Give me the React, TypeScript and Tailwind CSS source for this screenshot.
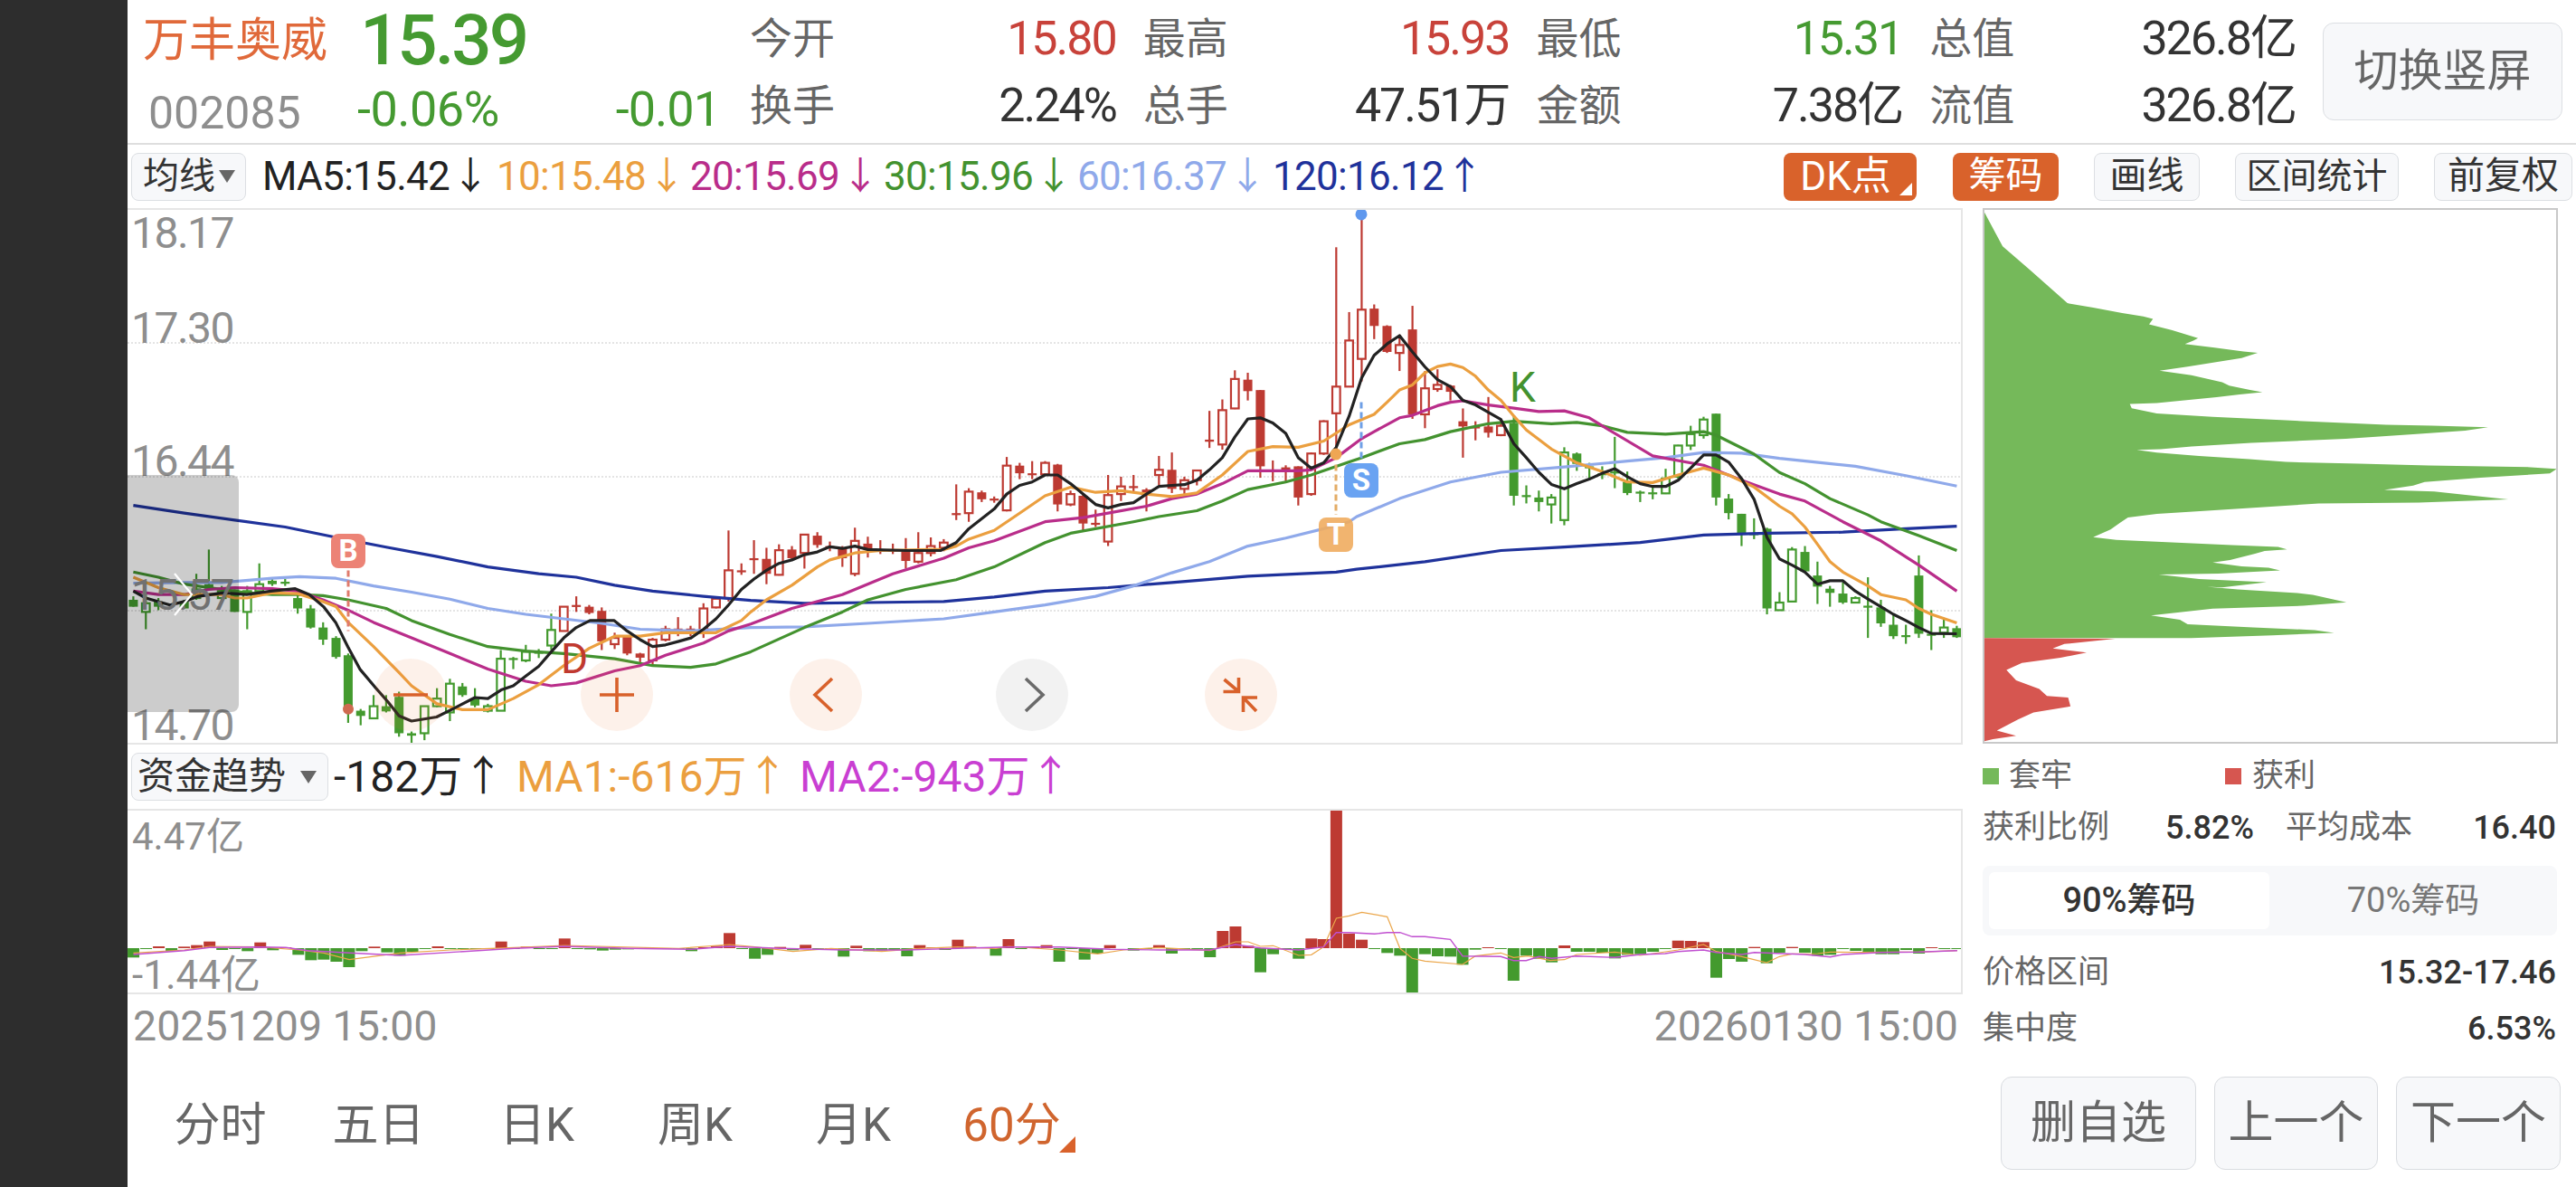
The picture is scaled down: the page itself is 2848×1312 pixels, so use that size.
import React from "react";

type P = [number, number];
const Y = (y: number) => 230 + y / 2.61;
const pts = (off: number, a: number[]): P[] => {
  const r: P[] = [];
  for (let i = 0; i < a.length; i += 2) r.push([off + a[i] / 2.24, Y(a[i + 1])]);
  return r;
};
const str = (p: P[]) => p.map((q) => q[0].toFixed(1) + "," + q[1].toFixed(1)).join(" ");

const ma5 = [
  ...pts(130, [39,1105,70,1125,130,1145,165,1135,200,1120,260,1110,320,1115,380,1105,440,1098,475,1115,510,1150,540,1195,570,1265,600,1330,640,1385,670,1425,697,1465,728,1480,790,1468,830,1445,885,1412,917,1415,950,1390,980,1378,1011,1350,1043,1322,1074,1280,1105,1240,1136,1210,1170,1190,1230,1190,1262,1220,1294,1245,1325,1265,1357,1260,1390,1250,1420,1240,1451,1215,1482,1185,1513,1145,1545,1100]),
  ...pts(830, [8,1070,39,1045,70,1025,102,1015,133,1000,165,992,196,977,227,982,258,975,290,985,384,988,470,988,509,965,540,925,603,868,634,825,666,800,697,790,729,770,760,770,792,795,823,825,854,855,885,865,917,855,948,850,980,825,1011,803,1043,800,1074,798,1105,785,1136,755,1168,720,1199,660,1231,608,1262,605,1293,620,1325,650,1356,720,1388,750,1419,735,1450,690,1482,600]),
  ...pts(1500, [12,490,43,425,75,392,106,368,138,415,169,458,200,495,232,515,263,555,294,568,357,610,389,680,420,720,451,762,482,797,514,810,545,795,576,782,608,765,639,752,670,775,702,795,733,803,765,803,796,785,827,750,859,712,890,712,921,733,953,780,984,840,1016,950,1047,1012,1078,1030,1110,1050,1141,1085,1172,1075,1204,1075,1235,1105,1266,1128,1298,1150,1329,1172,1360,1190,1392,1210,1423,1227,1486,1228]),
];
const ma10 = [
  ...pts(130, [39,1065,101,1095,165,1115,258,1115,290,1125,321,1125,383,1110,446,1112,509,1135,541,1150,571,1195,634,1265,697,1340,728,1378,791,1430,854,1447,917,1447,980,1415,1043,1375,1105,1320,1168,1270,1231,1235,1294,1235,1357,1225,1419,1225,1482,1225,1545,1190]),
  ...pts(830, [0,1165,39,1130,102,1088,165,1035,196,1015,258,995,321,988,446,985,478,985,509,975,540,955,603,930,666,880,729,830,792,805,854,820,917,815,980,825,1043,832,1105,822,1168,770,1231,702,1293,688,1356,690,1419,672,1482,625]),
  ...pts(1500, [12,610,43,595,75,560,106,525,138,510,169,475,200,457,232,450,263,460,294,485,326,525,357,555,389,600,420,640,482,695,545,735,608,760,670,790,733,792,796,770,859,750,921,770,984,805,1047,860,1078,882,1110,920,1141,970,1172,1020,1204,1050,1266,1090,1298,1115,1360,1130,1392,1155,1423,1172,1486,1197]),
];
const ma20 = [
  ...pts(130, [39,1105,101,1115,165,1115,226,1100,290,1095,383,1098,446,1105,509,1130,571,1160,634,1195,728,1240,823,1285,917,1330,1011,1365,1074,1378,1136,1370,1231,1335,1294,1320,1357,1290,1451,1255,1513,1220]),
  ...pts(830, [0,1200,102,1155,227,1115,352,1055,478,1010,540,980,603,960,729,905,823,893,885,880,980,860,1043,838,1105,825,1168,795,1231,758,1356,758,1388,755,1450,720]),
  ...pts(1500, [12,665,43,645,106,605,138,598,200,570,232,560,263,556,326,568,389,577,451,587,514,585,576,605,639,650,733,715,859,742,953,785,1047,825,1110,845,1204,905,1298,960,1392,1030,1486,1105]),
];
const ma30 = [
  ...pts(130, [39,1050,101,1065,165,1085,226,1095,321,1110,383,1115,446,1115,509,1118,571,1130,665,1155,728,1190,823,1230,917,1265,1011,1278,1105,1285,1231,1300,1325,1320,1419,1325,1482,1315]),
  ...pts(830, [0,1280,133,1210,227,1165,290,1130,384,1100,509,1072,603,1035,729,965,792,938,948,905,1011,890,1105,873,1168,845,1231,812,1325,790,1388,770,1450,745]),
  ...pts(1500, [12,720,106,680,169,668,232,645,326,622,389,615,482,622,545,618,608,628,670,647,765,652,859,645,890,655,984,710,1047,763,1110,795,1172,838,1266,885,1298,905,1392,945,1486,988]),
];
const ma60 = [
  ...pts(130, [39,1082,165,1080,258,1080,383,1068,451,1063,541,1068,634,1090,728,1108,823,1128,917,1155,1011,1172,1105,1185,1199,1198,1294,1215,1419,1220]),
  ...pts(830, [0,1210,133,1208,290,1198,478,1185,603,1165,729,1145,854,1120,948,1090,1043,1052,1136,1020,1231,975,1325,952,1419,925,1482,905]),
  ...pts(1500, [0,890,106,838,232,790,357,762,514,747,670,730,765,720,859,705,953,707,1047,722,1235,745,1360,772,1486,802]),
];
const ma120 = [
  ...pts(130, [39,858,165,880,290,900,415,920,541,950,665,978,791,1005,917,1035,1043,1055,1136,1065,1231,1088,1325,1105,1451,1120]),
  ...pts(830, [0,1132,133,1140,290,1138,478,1135,603,1122,729,1105,885,1095,1043,1080,1231,1062,1450,1050]),
  ...pts(1500, [0,1042,169,1020,357,988,514,978,702,965,859,943,1016,938,1204,935,1360,925,1486,918]),
];

// x, wickTop, wickBottom, bodyTop, bodyBottom, solid
type C = [number, number, number, number, number, number];
const G = "#439a2e";
const R = "#bd3a32";
const g3: C[] = [
  [39,1120,1150,1130,1150,1],[70,1110,1215,1140,1165,0],[101,1125,1160,1135,1150,1],[165,1130,1155,1135,1155,1],[195,1055,1130,1100,1125,0],[226,985,1100,1085,1098,1],[258,1090,1130,1105,1125,0],[290,1100,1165,1100,1165,1],[321,1090,1215,1105,1165,0],[351,1025,1110,1085,1105,0],[383,1070,1090,1075,1085,1],[415,1070,1090,1078,1082,1],
  [446,1115,1170,1125,1155,1],[478,1145,1213,1155,1210,1],[509,1195,1260,1210,1245,1],[541,1235,1300,1240,1295,1],[571,1285,1485,1290,1445,1],[602,1445,1492,1450,1465,1],[634,1405,1472,1437,1472,0],[665,1405,1455,1437,1452,1],[697,1395,1525,1410,1515,1],[728,1510,1545,1515,1522,1],[760,1437,1535,1437,1515,0],[791,1385,1440,1415,1437,0],[823,1358,1480,1372,1455,0],[854,1370,1410,1380,1405,1],[885,1385,1440,1415,1435,1],[917,1430,1455,1437,1450,0],[949,1275,1450,1300,1450,0],[980,1295,1330,1298,1303,1],[1011,1260,1310,1280,1305,0],[1043,1272,1298,1280,1285,1],[1074,1170,1275,1217,1262,0],
];
const r3: C[] = [
  [1105,1150,1220,1150,1220,0],[1136,1120,1165,1145,1150,1],[1168,1145,1172,1150,1168,1],[1199,1152,1275,1162,1250,1],[1231,1225,1272,1240,1258,0],[1262,1235,1290,1235,1285,1],[1294,1283,1310,1285,1297,1],[1325,1240,1322,1245,1305,0],[1357,1205,1250,1215,1245,0],[1388,1180,1235,1213,1218,1],[1419,1205,1235,1213,1218,1],[1451,1140,1240,1155,1225,0],[1482,1120,1155,1127,1152,0],[1513,930,1135,1045,1125,0],[1545,1025,1058,1045,1050,1],
];
const r4: C[] = [
  [8,958,1055,1010,1015,1],[39,980,1085,1012,1055,1],[70,970,1060,987,1058,0],[102,975,1015,985,1010,1],[133,940,1040,942,995,0],[165,935,980,945,972,1],[196,962,990,975,980,1],[227,975,1035,980,1010,1],[258,922,1062,960,1055,0],[290,948,1008,968,985,1],[321,958,998,985,988,1],[352,968,998,985,988,1],[384,952,1040,990,1018,1],[415,935,1025,995,1020,0],[446,950,1005,975,995,0],[478,955,990,965,980,0],[509,797,900,880,883,1],[540,808,905,818,880,0],[572,815,848,820,840,1],[603,832,850,838,843,1],[634,718,875,743,872,0],[666,735,782,743,765,1],[697,730,782,765,770,1],[729,730,770,735,768,0],[760,738,875,740,855,1],[792,815,860,825,855,0],[823,825,930,830,910,1],[854,870,920,908,912,1],[885,770,975,828,962,0],[917,775,845,803,825,0],[948,770,820,802,807,1],[980,808,875,812,830,1],[1011,715,800,755,770,0],[1043,705,822,755,810,1],[1074,775,835,785,810,0],[1105,755,800,757,785,0],[1136,585,692,668,674,1],[1168,552,697,583,682,0],[1199,468,580,493,578,0],[1231,475,555,495,528,1],[1262,525,778,525,745,1],[1293,728,788,755,760,1],[1325,742,790,748,760,1],[1356,745,858,745,835,1],[1388,705,830,708,825,0],[1419,612,712,615,708,0],[1450,113,700,515,592,0],[1482,300,515,382,515,0],[1513,18,500,293,435,0],[1544,278,378,290,340,1],
];
const r5: C[] = [
  [75,338,418,340,415,1],[106,365,470,395,418,0],[138,282,608,350,595,1],[169,470,635,520,595,0],[200,465,530,510,522,0],[232,510,555,512,530,1],[263,578,720,615,630,1],[294,615,670,630,633,1],[326,545,662,630,648,1],[357,608,658,628,655,0],
];
const g5: C[] = [
  [389,600,858,620,830,1],[420,800,852,828,832,1],[451,815,875,835,848,1],[482,825,910,835,855,0],[514,690,915,705,900,0],[545,705,758,708,738,1],[576,735,785,745,750,1],[608,745,782,765,770,1],[639,660,808,760,765,1],[670,760,828,790,822,1],[702,815,848,818,822,1],[733,800,840,820,825,1],[765,752,825,780,823,0],[796,683,780,685,775,0],[827,628,698,652,685,0],[859,602,665,610,655,0],[890,593,858,593,835,1],[921,825,898,838,880,1],[953,882,975,882,938,1],[984,895,955,938,943,1],[1016,922,1172,925,1155,1],[1047,1108,1160,1138,1160,0],[1078,978,1135,985,1135,0],[1110,975,1050,992,1048,1],[1141,1020,1142,1060,1092,1],[1172,1090,1150,1098,1110,1],[1204,1080,1142,1112,1138,1],[1235,1120,1140,1125,1138,0],[1266,1065,1240,1147,1150,1],[1298,1130,1208,1152,1198,1],[1329,1172,1243,1202,1235,1],[1360,1202,1257,1232,1236,1],[1392,1002,1240,1060,1228,1],[1423,1160,1275,1228,1233,1],[1454,1182,1240,1210,1225,0],[1486,1205,1240,1212,1238,1],
];

function Candle({ c, off, color }: { c: C; off: number; color: string }) {
  const x = off + c[0] / 2.24;
  const t = Y(c[3]);
  const h = Math.max(2.2, Y(c[4]) - t);
  return (
    <g>
      <line x1={x} x2={x} y1={Y(c[1])} y2={Y(c[2])} stroke={color} strokeWidth={2.2} />
      {c[5] ? (
        <rect x={x - 5} y={t} width={10} height={h} fill={color} />
      ) : (
        <rect x={x - 4.3} y={t} width={8.6} height={h} fill="#fff" stroke={color} strokeWidth={2.2} />
      )}
    </g>
  );
}

function MainChart() {
  return (
    <svg className="block h-[589px] w-[2027px]" viewBox="141 232 2027 589">
      {[379, 527, 675].map((y) => (
        <line key={y} x1={141} x2={2168} y1={y} y2={y} stroke="#c9c9c9" strokeWidth={1} strokeDasharray="2 2" />
      ))}
      {g3.map((c, i) => <Candle key={"a" + i} c={c} off={130} color={G} />)}
      {r3.map((c, i) => <Candle key={"b" + i} c={c} off={130} color={R} />)}
      {r4.map((c, i) => <Candle key={"c" + i} c={c} off={830} color={R} />)}
      {r5.map((c, i) => <Candle key={"d" + i} c={c} off={1500} color={R} />)}
      {g5.map((c, i) => <Candle key={"e" + i} c={c} off={1500} color={G} />)}
      <polyline points={str(ma120)} fill="none" stroke="#1f329b" strokeWidth={3.2} strokeLinejoin="round" />
      <polyline points={str(ma60)} fill="none" stroke="#8fa9ea" strokeWidth={3.2} strokeLinejoin="round" />
      <polyline points={str(ma30)} fill="none" stroke="#43922f" strokeWidth={3.2} strokeLinejoin="round" />
      <polyline points={str(ma20)} fill="none" stroke="#b92d8a" strokeWidth={3.2} strokeLinejoin="round" />
      <polyline points={str(ma10)} fill="none" stroke="#eb9f3f" strokeWidth={3.2} strokeLinejoin="round" />
      <polyline points={str(ma5)} fill="none" stroke="#222222" strokeWidth={3.2} strokeLinejoin="round" />
      <line x1={385} x2={385} y1={Y(1045)} y2={Y(1220)} stroke="#e07b6c" strokeWidth={3} strokeDasharray="7 4" />
      <circle cx={385} cy={Y(1445)} r={6} fill="#cf6a50" />
      <line x1={1477} x2={1477} y1={Y(740)} y2={Y(885)} stroke="#e3ac66" strokeWidth={3} strokeDasharray="7 4" />
      <circle cx={1477} cy={Y(710)} r={6.5} fill="#efa653" />
      <line x1={1505} x2={1505} y1={Y(560)} y2={Y(730)} stroke="#6f9fe6" strokeWidth={3} strokeDasharray="7 4" />
      <circle cx={1505} cy={Y(18)} r={6.5} fill="#5f98ee" />
    </svg>
  );
}

const z7 = [-31,-3,6,-10,5,10,22,-6,-3,-10,19,-7,3,-22,-40,-38,-45,-63,-10,5,-14,-25,-12,-3,6,-3,-3,-2,-2,22,-2,5,-2,-2,32,-2,-4,-8,-5,-4,-3,-3,-3,-3,-10,3,8,50,-2,-35,-22,4,-7,11,-5,-5,-28,8,-10,-8,-6,-27,10,3,-6,28,5,2,-25,30,-3,3,10,-45,-3,-38,-18,10];
const z8: [number, number][] = [[38,-8],[61,-2],[84,10],[107,-18],[130,-4],[153,-3],[176,-30],[199,57],[222,72],[245,8],[267,-80],[290,-20],[313,-2],[336,-35],[359,32],[381,30],[404,460],[427,48],[450,28],[473,-2],[496,-16],[519,-25],[541,-147],[564,-20],[587,-27],[610,-28],[632,-55],[655,-5],[678,3],[701,-2],[724,-108],[747,-25],[770,-35],[793,-47],[816,9],[838,-12],[861,-12],[884,-15],[907,-34],[930,-22],[953,-20],[976,-12],[998,-2],[1021,25],[1044,24],[1067,20],[1090,-98],[1113,-36],[1136,-45],[1159,4],[1181,-50],[1204,-15],[1227,4],[1250,-15],[1273,-25],[1296,-22],[1319,-2],[1342,-9],[1365,-12],[1388,-20],[1410,-20],[1433,-6],[1456,-18],[1479,2],[1502,-3],[1525,-2]];
const bars: [number, number][] = [
  ...z7.map((v, k): [number, number] => [130 + (25 + 19.98 * k) / 1.425, v / 3]),
  ...z8.map((b): [number, number] => [1230 + b[0] / 1.633, b[1] / 3]),
];
const subPts = (a: number[], off: number, sx: number): P[] => {
  const r: P[] = [];
  for (let i = 0; i < a.length; i += 2) r.push([off + a[i] / sx, 820 + a[i + 1] / 3]);
  return r;
};
const subPurple = [
  ...subPts([25,705,105,692,145,682,225,680,265,682,300,692,365,700,445,708,545,695,625,685,704,678,804,685,904,688,964,678,1044,685,1144,690,1244,690,1324,685,1404,680,1484,680,1564,688], 130, 1.425),
  ...subPts([84,690,176,690,222,672,267,683,336,690,381,680,404,632,427,632,473,637,496,632,519,632,541,646,564,646,610,655,632,710,701,712,724,725,747,725,770,712,793,718,838,710,907,715,953,705,998,702,1021,695,1067,690,1090,698,1136,705,1159,698,1250,705,1296,713,1319,705,1388,698,1456,697,1525,692], 1230, 1.633),
];
const subOrange = [
  ...subPts([25,700,105,690,145,678,225,680,285,690,325,700,365,722,445,700,525,690,625,682,704,675,884,685,964,672,1004,680,1064,695,1124,685,1204,695,1264,685,1324,680,1384,685,1404,678,1484,690,1544,703], 130, 1.425),
  ...subPts([20,690,84,682,176,692,222,663,245,663,267,678,290,676,336,708,359,706,381,680,404,585,427,577,450,565,496,580,519,685,541,718,564,727,632,738,655,710,701,700,724,715,750,710,790,725,816,722,838,705,907,697,953,708,1021,690,1067,672,1090,695,1136,712,1181,732,1204,712,1227,703,1273,702,1296,697,1342,698,1410,697,1456,697,1525,692], 1230, 1.633),
];

function SubChart() {
  return (
    <svg className="block h-[201px] w-[2027px]" viewBox="141 896 2027 201">
      {bars.map((b, i) => {
        const h = Math.max(1, Math.abs(b[1]));
        return (
          <rect key={i} x={b[0] - 6.5} width={13} y={b[1] > 0 ? 1048 - h : 1048} height={h} fill={b[1] > 0 ? R : G} />
        );
      })}
      <polyline points={str(subOrange)} fill="none" stroke="#eba64a" strokeWidth={1.2} />
      <polyline points={str(subPurple)} fill="none" stroke="#c04fd0" strokeWidth={1.4} />
    </svg>
  );
}

const cp = (a: number[]) => {
  const r: string[] = [];
  for (let i = 0; i < a.length; i += 2) r.push((a[i] / 2.347 + 2180).toFixed(1) + "," + Y(a[i + 1]).toFixed(1));
  return r.join(" ");
};
const chipGreen = cp([28,5,80,113,150,180,248,277,315,290,390,305,445,315,470,322,460,338,520,355,587,378,575,385,553,395,630,405,705,416,742,420,700,435,560,460,487,472,570,485,650,505,668,515,722,527,754,534,695,540,635,548,480,565,410,568,415,580,480,595,625,605,815,615,1075,628,1195,630,1340,635,1280,645,1145,655,970,668,725,680,570,690,490,698,428,700,480,708,590,718,720,727,815,735,1005,740,1185,745,1450,750,1518,755,1500,768,1320,780,1175,793,1145,803,1070,816,1200,820,1325,835,1392,843,1160,852,900,855,620,875,480,885,405,895,385,910,360,930,315,952,375,960,480,965,675,975,795,980,818,987,760,992,735,1000,670,1018,625,1025,700,1036,770,1040,800,1048,640,1057,485,1060,590,1073,690,1078,765,1082,650,1097,610,1095,690,1103,845,1113,885,1118,972,1140,860,1150,625,1158,465,1178,540,1190,560,1203,730,1212,890,1220,940,1228,780,1235,570,1243,28,1243]);
const chipRed = cp([28,1243,372,1245,240,1260,210,1273,298,1285,230,1300,130,1315,90,1335,115,1365,175,1390,195,1410,250,1415,256,1440,160,1458,120,1478,65,1510,115,1525,55,1535,28,1542]);

function Caret() {
  return (
    <svg className="block h-[14px] w-[18px]" viewBox="0 0 18 14">
      <polygon points="0,0 18,0 9,14" fill="#666666" />
    </svg>
  );
}

function MaItem({ text, color, arrow, w }: { text: string; color: string; arrow: string; w: string }) {
  return (
    <div className={"flex shrink-0 items-center whitespace-nowrap " + w + " " + color}>
      <span>{text}</span>
      <span className="flex w-[46px] shrink-0 justify-center text-[0.95em] leading-none tracking-normal">{arrow}</span>
    </div>
  );
}

function Stat({ label, value, color }: { label: string; value: string; color: string }) {
  return (
    <div className="flex items-center justify-between leading-[60px]">
      <span className="text-[47px] text-[#666666]">{label}</span>
      <span className={"text-[52px] tracking-[-2px] " + color}>{value}</span>
    </div>
  );
}

function CircleBtn({ pos, gray, children }: { pos: string; gray?: boolean; children: React.ReactNode }) {
  return (
    <div className={"absolute top-[496px] h-[80px] w-[80px] rounded-full " + pos + " " + (gray ? "bg-black/5" : "bg-[#e8732f]/10")}>
      <svg className="block h-[80px] w-[80px]" viewBox="0 0 80 80" fill="none" stroke={gray ? "#6a6a6a" : "#d8612b"} strokeWidth={3.6}>
        {children}
      </svg>
    </div>
  );
}

const toolBtn = "flex h-[53px] items-center justify-center rounded-[8px] border border-[#dcdfe3] bg-[#f7f8fa] text-[#333333]";
const bottomBtn = "flex h-[103px] items-center justify-center rounded-[12px] border border-[#d9dce0] bg-[#f7f8fa] text-[50px] text-[#666666]";
const axis = "absolute left-[4px] text-[48px] leading-[50px] tracking-[-1.5px] text-[#8e8e8e]";

export default function App() {
  return (
    <div className="flex h-[1312px] w-[2848px] overflow-hidden bg-white [font-family:Roboto,'Noto_Sans_CJK_SC',sans-serif]">
      <div className="h-full w-[141px] shrink-0 bg-[#2d2d2d]" />
      <div className="flex min-w-0 flex-1 flex-col">
        {/* header */}
        <div className="flex h-[160px] shrink-0 border-b-2 border-[#dedede]">
          <div className="ml-[17px] flex w-[638px] flex-col">
            <div className="flex h-[90px] items-center">
              <span className="w-[240px] text-[51px] leading-[60px] text-[#e0693a]">万丰奥威</span>
              <span className="text-[78px] font-medium leading-[78px] tracking-[-3px] text-[#459a31]">15.39</span>
            </div>
            <div className="flex h-[62px] items-center leading-none">
              <span className="ml-[6px] w-[231px] pt-[8px] text-[50px] text-[#8e8e8e]">002085</span>
              <span className="text-[54px] tracking-[-0.5px] text-[#459a31]">-0.06%</span>
              <span className="flex-1 text-right text-[54px] tracking-[-1px] text-[#459a31]">-0.01</span>
            </div>
          </div>
          <div className="ml-[33px] grid w-[1709px] grid-cols-4 grid-rows-[60px_60px] gap-x-[30px] gap-y-[14px] pt-[13px]">
            <Stat label="今开" value="15.80" color="text-[#c8423a]" />
            <Stat label="最高" value="15.93" color="text-[#c8423a]" />
            <Stat label="最低" value="15.31" color="text-[#459a31]" />
            <Stat label="总值" value="326.8亿" color="text-[#333333]" />
            <Stat label="换手" value="2.24%" color="text-[#333333]" />
            <Stat label="总手" value="47.51万" color="text-[#333333]" />
            <Stat label="金额" value="7.38亿" color="text-[#333333]" />
            <Stat label="流值" value="326.8亿" color="text-[#333333]" />
          </div>
          <div className="ml-[30px] mt-[25px] flex h-[108px] w-[265px] items-center justify-center rounded-[12px] border border-[#dcdfe3] bg-[#f7f8fa] text-[49px] text-[#666666]">
            切换竖屏
          </div>
        </div>
        {/* toolbar */}
        <div className="flex h-[70px] shrink-0 items-center pl-[4px] text-[44px] tracking-[-0.7px]">
          <div className="flex h-[53px] w-[127px] items-center gap-[4px] rounded-[8px] border border-[#dcdfe3] bg-[#f7f8fa] pl-[12px] text-[40px] tracking-normal text-[#333333]">
            <span>均线</span>
            <Caret />
          </div>
          <div className="ml-[18px] flex">
            <MaItem text="MA5:15.42" color="text-[#222222]" arrow="↓" w="w-[259px]" />
            <MaItem text="10:15.48" color="text-[#eb9f3f]" arrow="↓" w="w-[214px]" />
            <MaItem text="20:15.69" color="text-[#b92d8a]" arrow="↓" w="w-[214px]" />
            <MaItem text="30:15.96" color="text-[#43922f]" arrow="↓" w="w-[214px]" />
            <MaItem text="60:16.37" color="text-[#8fa9ea]" arrow="↓" w="w-[216px]" />
            <MaItem text="120:16.12" color="text-[#1f329b]" arrow="↑" w="w-[224px]" />
          </div>
          <div className="ml-[341px] flex tracking-normal">
            <div className="relative flex h-[53px] w-[147px] items-center justify-center rounded-[8px] bg-[#d9622b] pr-[10px] text-[44px] text-white">
              DK点
              <svg className="absolute bottom-[6px] right-[5px] block h-[14px] w-[14px]" viewBox="0 0 14 14">
                <polygon points="14,0 14,14 0,14" fill="#ffffff" />
              </svg>
            </div>
            <div className="ml-[40px] flex h-[53px] w-[117px] items-center justify-center rounded-[8px] bg-[#d9622b] text-[41px] text-white">筹码</div>
            <div className={toolBtn + " ml-[39px] w-[117px] text-[41px]"}>画线</div>
            <div className={toolBtn + " ml-[39px] w-[181px] text-[39px]"}>区间统计</div>
            <div className={toolBtn + " ml-[39px] w-[153px] text-[41px]"}>前复权</div>
          </div>
        </div>
        {/* body */}
        <div className="flex min-h-0 flex-1">
          <div className="flex w-[2029px] shrink-0 flex-col">
            <div className="relative h-[593px] shrink-0 border-y-2 border-r-2 border-[#e6e6e6]">
              <MainChart />
              <div className={axis + " top-[1px]"}>18.17</div>
              <div className={axis + " top-[106px]"}>17.30</div>
              <div className={axis + " top-[253px]"}>16.44</div>
              <div className={axis + " top-[401px]"}>15.57</div>
              <div className={axis + " top-[545px]"}>14.70</div>
              <div className="absolute left-[479px] top-[471px] text-[46px] leading-[50px] text-[#c0392f]">D</div>
              <div className="absolute left-[1528px] top-[171px] text-[46px] leading-[50px] text-[#43922f]">K</div>
              <div className="absolute left-[225px] top-[358px] flex h-[38px] w-[38px] items-center justify-center rounded-[8px] bg-[#ec8376] text-[33px] font-bold text-white">B</div>
              <div className="absolute left-[1317px] top-[340px] flex h-[38px] w-[38px] items-center justify-center rounded-[8px] bg-[#efac5f]/90 text-[33px] font-bold text-white">T</div>
              <div className="absolute left-[1345px] top-[280px] flex h-[38px] w-[38px] items-center justify-center rounded-[8px] bg-[#6aa3f2] text-[33px] font-bold text-white">S</div>
              <CircleBtn pos="left-[273px]"><path d="M21 40H59" /></CircleBtn>
              <CircleBtn pos="left-[501px]"><path d="M21 40H59M40 21V59" /></CircleBtn>
              <CircleBtn pos="left-[732px]"><path d="M47 22L28 40L47 58" /></CircleBtn>
              <CircleBtn pos="left-[960px]" gray><path d="M33 22L52 40L33 58" /></CircleBtn>
              <CircleBtn pos="left-[1191px]"><path d="M21.5 23L37.5 36.5M20.5 36.5H37.5V21M42.5 59V43H58M42.5 43L57 58" /></CircleBtn>
              {/* drag handle */}
              <div className="absolute left-0 top-[293px] h-[262px] w-[123px] rounded-r-[8px] bg-black/20">
                <svg className="absolute left-[50px] top-[108px] block h-[48px] w-[24px]" viewBox="0 0 24 48" fill="none" stroke="#ffffff" strokeWidth={2.2}>
                  <path d="M2 1L21 24L2 47" />
                </svg>
              </div>
            </div>
            <div className="flex h-[71px] shrink-0 items-center pl-[4px] text-[48px]">
              <div className="flex h-[53px] w-[218px] shrink-0 items-center gap-[16px] rounded-[8px] border border-[#dcdfe3] bg-[#f7f8fa] pl-[6px] text-[41px] text-[#333333]">
                <span>资金趋势</span>
                <Caret />
              </div>
              <div className="ml-[6px] flex">
                <MaItem text="-182万" color="text-[#222222]" arrow="↑" w="w-[202px]" />
                <MaItem text="MA1:-616万" color="text-[#eb9f3f]" arrow="↑" w="w-[313px]" />
                <MaItem text="MA2:-943万" color="text-[#c93fd2]" arrow="↑" w="w-[300px]" />
              </div>
            </div>
            <div className="relative h-[205px] shrink-0 border-y-2 border-r-2 border-[#e6e6e6]">
              <SubChart />
              <div className="absolute left-[5px] top-[4px] text-[42px] leading-[50px] text-[#8e8e8e]">4.47亿</div>
              <div className="absolute left-[5px] top-[157px] text-[44px] leading-[50px] text-[#8e8e8e]">-1.44亿</div>
            </div>
            <div className="flex h-[71px] shrink-0 items-center justify-between pl-[6px] pr-[5px] text-[46.5px] text-[#8e8e8e]">
              <span>20251209 15:00</span>
              <span>20260130 15:00</span>
            </div>
            <div className="grid min-h-0 flex-1 grid-cols-[repeat(6,175px)] items-center pl-[15px] pt-[6px] text-center text-[51px] text-[#666666]">
              <span>分时</span>
              <span>五日</span>
              <span>日K</span>
              <span>周K</span>
              <span>月K</span>
              <span className="relative text-[#d0652e]">
                60分
                <svg className="absolute left-[140px] top-[50px] block h-[18px] w-[18px]" viewBox="0 0 18 18">
                  <polygon points="18,0 18,18 0,18" fill="#d9622b" />
                </svg>
              </span>
            </div>
          </div>
          {/* right panel */}
          <div className="flex flex-1 flex-col pl-[22px]">
            <div className="h-[592px] w-[636px] shrink-0 border-2 border-[#c9c9c9]">
              <svg className="block h-[588px] w-[632px]" viewBox="2194 233 632 588">
                <polygon points={chipGreen} fill="#75b95a" />
                <polygon points={chipRed} fill="#d65650" />
              </svg>
            </div>
            <div className="flex h-[72px] shrink-0 items-center text-[35px] text-[#666666]">
              <span className="h-[18px] w-[18px] bg-[#75b95a]" />
              <span className="ml-[11px] w-[239px]">套牢</span>
              <span className="h-[18px] w-[18px] bg-[#d65650]" />
              <span className="ml-[12px]">获利</span>
            </div>
            <div className="flex h-[42px] w-[634px] shrink-0 items-center text-[35px] text-[#666666]">
              <span>获利比例</span>
              <span className="w-[160px] text-right text-[36px] font-medium text-[#333333]">5.82%</span>
              <span className="ml-[35px]">平均成本</span>
              <span className="flex-1 text-right text-[36px] font-medium text-[#333333]">16.40</span>
            </div>
            <div className="mt-[21px] flex h-[77px] w-[635px] shrink-0 items-center rounded-[8px] bg-[#f7f8fa] pl-[7px] text-[38px]">
              <div className="flex h-[63px] w-[310px] items-center justify-center rounded-[6px] bg-white font-medium text-[#333333]">90%筹码</div>
              <div className="flex-1 text-center text-[#777777]">70%筹码</div>
            </div>
            <div className="mt-[20px] flex h-[42px] w-[634px] shrink-0 items-center justify-between text-[35px] text-[#666666]">
              <span>价格区间</span>
              <span className="text-[36px] font-medium text-[#333333]">15.32-17.46</span>
            </div>
            <div className="mt-[20px] flex h-[42px] w-[634px] shrink-0 items-center justify-between text-[35px] text-[#666666]">
              <span>集中度</span>
              <span className="text-[36px] font-medium text-[#333333]">6.53%</span>
            </div>
            <div className="ml-[20px] mt-[32px] flex shrink-0 gap-[20px]">
              <div className={bottomBtn + " w-[216px]"}>删自选</div>
              <div className={bottomBtn + " w-[181px]"}>上一个</div>
              <div className={bottomBtn + " w-[182px]"}>下一个</div>
            </div>
          </div>
        </div>
      </div>
    </div>
  );
}
